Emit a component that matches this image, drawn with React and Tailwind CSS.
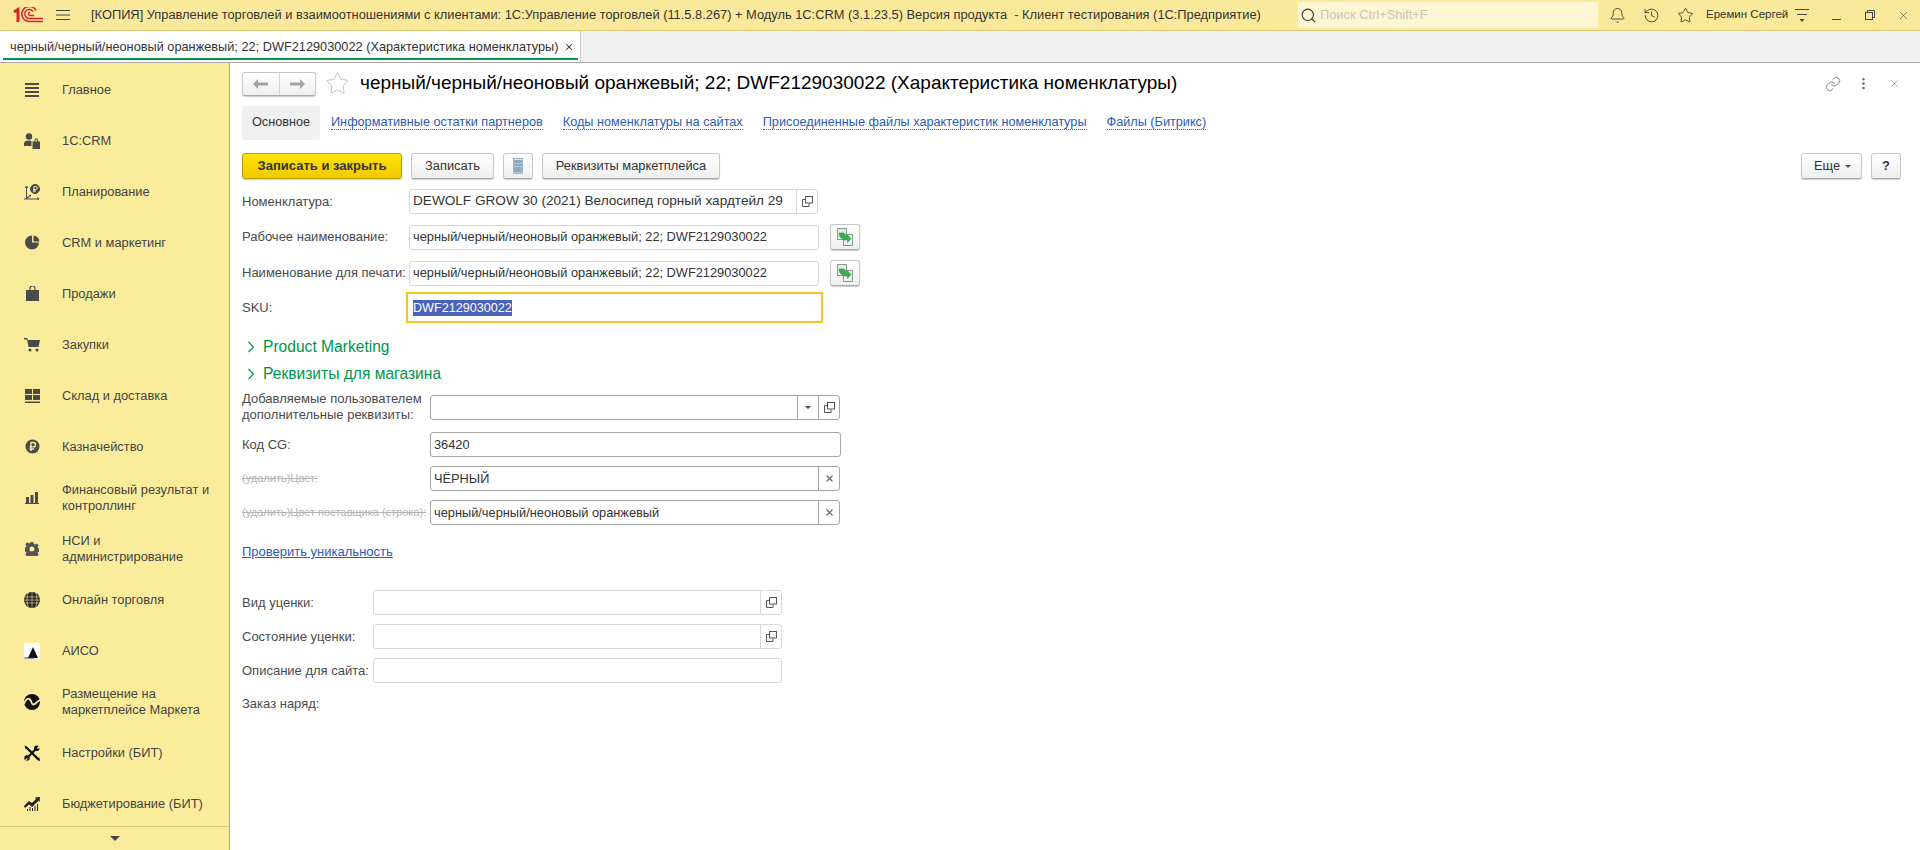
import React from "react";
import { Bell, History, Star, Search, Link, X, MoreVertical } from "lucide-react";

const CopyIcon = () => (
  <svg width="11" height="11" viewBox="0 0 11 11" fill="none" stroke="#555" strokeWidth="1">
    <path d="M3.500 3.500h-3v7h6.500v-3" />
    <rect x="3.500" y="0.500" width="7" height="6.500" />
  </svg>
);

const SmallX = () => (
  <svg width="7" height="7" viewBox="0 0 7 7" stroke="#666" strokeWidth="1.100"><path d="M0.500 0.500l6 6M6.500 0.500l-6 6" /></svg>
);

const GreenCopy = () => (
  <svg width="18" height="18" viewBox="0 0 18 18">
    <rect x="1.500" y="0.500" width="9" height="11" fill="#e4ece6" stroke="#8a9a90" />
    <rect x="7.500" y="6.500" width="9" height="11" fill="#f1f5f2" stroke="#8a9a90" />
    <path d="M3 5h5l1 3 2-1.500 4 4-3.500 4v-2.500H8L4 9z" fill="#35b050" stroke="#1f8a3a" strokeWidth=".5" />
  </svg>
);

const menuIcons = {
  main: (
    <svg width="16" height="16" viewBox="0 0 16 16" fill="#4a4a4a"><path d="M1 1h14v2H1zM1 5h14v2H1zM1 9h14v2H1zM1 13h14v2H1z" /></svg>
  ),
  crm: (
    <svg width="16" height="16" viewBox="0 0 16 16" fill="#4a4a4a">
      <circle cx="5" cy="3.500" r="3.200" />
      <path d="M0 13v-2.500C0 8.500 2 7.500 5 7.500c1.200 0 2 .2 2.500.5V13z" />
      <path d="M8.500 8.500H16V16H8.500zM10.500 8.500V7a1.700 1.700 0 0 1 3.500 0v1.500h-1V7a.7.7 0 0 0-1.500 0v1.500z" />
    </svg>
  ),
  plan: (
    <svg width="16" height="16" viewBox="0 0 16 16" fill="none" stroke="#4a4a4a" strokeWidth="1">
      <path d="M2.500 2v13M1 4l1.500-2L4 4M0 15h15M13 13.500l2 1.500-2 1.500" />
      <path d="M3 14l4-3" strokeWidth="1.200" />
      <circle cx="11" cy="5" r="4.500" fill="#4a4a4a" />
      <path d="M10 8.500V2.500h1.700a1.500 1.500 0 0 1 0 3H9M9 7h3" stroke="#fbec9d" strokeWidth="1" />
    </svg>
  ),
  pie: (
    <svg width="15" height="15" viewBox="0 0 15 15" fill="#4a4a4a">
      <path d="M7 0.500v7h7A7 7 0 1 1 7 0.500z" />
      <path d="M8.500 0.500a6.500 6.500 0 0 1 6 6h-6z" />
    </svg>
  ),
  bag: (
    <svg width="13" height="15" viewBox="0 0 13 15" fill="#4a4a4a">
      <path d="M0 4h13v11H0z" />
      <path d="M4 5V2.500a2.500 2.500 0 0 1 5 0V5" fill="none" stroke="#4a4a4a" strokeWidth="1.200" />
      <path d="M5 4V2.500a1.500 1.500 0 0 1 3 0V4z" fill="#fbec9d" />
    </svg>
  ),
  cart: (
    <svg width="16" height="14" viewBox="0 0 16 14" fill="#4a4a4a">
      <path d="M0 0h3l1 2h12l-1.500 7H4.500L3 1.500H0z" />
      <circle cx="6" cy="12" r="1.500" />
      <circle cx="13" cy="12" r="1.500" />
    </svg>
  ),
  store: (
    <svg width="15" height="14" viewBox="0 0 15 14" fill="#4a4a4a">
      <path d="M0 0h7v5H0zM8 0h7v5H8zM0 6h7v5H0zM8 6h7v5H8zM0 12.500h15V14H0z" />
    </svg>
  ),
  rub: (
    <svg width="15" height="15" viewBox="0 0 15 15">
      <circle cx="7.500" cy="7.500" r="7" fill="#4a4a4a" />
      <path d="M6 12V3.500h2.300a2.200 2.200 0 0 1 0 4.400H4.500M4.500 10H9" fill="none" stroke="#fbec9d" strokeWidth="1.400" />
    </svg>
  ),
  bars: (
    <svg width="14" height="12" viewBox="0 0 14 12" fill="#4a4a4a">
      <path d="M1 5h3v6H1zM5.500 3h3v8h-3zM10 0h3v11h-3zM0 11h14v1H0z" />
    </svg>
  ),
  gear: (
    <svg width="14" height="14" viewBox="0 0 14 14" fill="#555">
      <path fillRule="evenodd" d="M5.600 0h2.800l.4 2 1.200.5 1.700-1.100 2 2-1.100 1.700.5 1.200 2 .4v2.800l-2 .4-.5 1.200 1.100 1.700-2 2-1.700-1.100-1.200.5-.4 2H5.600l-.4-2-1.200-.5-1.700 1.100-2-2 1.100-1.700-.5-1.200-2-.4V5.600l2-.4.500-1.200L.3 2.300l2-2L4 1.400l1.200-.5zM7 4.500a2.500 2.500 0 1 0 0 5 2.500 2.500 0 0 0 0-5z" />
    </svg>
  ),
  globe: (
    <svg width="16" height="16" viewBox="0 0 16 16" fill="none">
      <circle cx="8" cy="8" r="8" fill="#222" />
      <path d="M0 5h16M0 8h16M0 11h16M8 0v16M4.500 1c-2 4-2 10 0 14M11.500 1c2 4 2 10 0 14" stroke="#fbec9d" strokeWidth=".6" />
    </svg>
  ),
  aiso: (
    <svg width="16" height="16" viewBox="0 0 16 16">
      <rect width="16" height="16" fill="#fff" />
      <path d="M9 4l5 11H4z" fill="#111" />
      <path d="M0 15.500h10v-1H1z" fill="#333" />
    </svg>
  ),
  market: (
    <svg width="16" height="16" viewBox="0 0 16 16">
      <circle cx="8" cy="8" r="8" fill="#111" />
      <path d="M0 10C2 5 4 3.500 6 5.500s1 5 3.500 5S13 7 16 6" fill="none" stroke="#fbec9d" strokeWidth="1.800" />
    </svg>
  ),
  tools: (
    <svg width="16" height="16" viewBox="0 0 16 16" fill="#111" stroke="#111">
      <path d="M2.500 2.500l11 11M13 3L3 13" strokeWidth="2.300" fill="none" />
      <circle cx="12.800" cy="3.200" r="2.700" stroke="none" />
      <circle cx="3" cy="13" r="2.700" stroke="none" />
      <path d="M12.500 3.500L15 0.500l1 3z" fill="#fbec9d" stroke="none" />
      <path d="M3.500 12.500L0.500 15.500H3z" fill="#fbec9d" stroke="none" />
      <path d="M0.500 0.500l2.500 1 .5 2-2 .5z" stroke="none" />
      <path d="M12 11.500l3.500 1.500.5 3-3-1z" stroke="none" />
    </svg>
  ),
  chart: (
    <svg width="16" height="14" viewBox="0 0 16 14" fill="#222">
      <path d="M0 9l5-5 3 2 4-4-1-1.500L16 0l-.5 5-1.200-1.200L8.200 10 5 7.500 1 11z" />
      <path d="M3 12h1v2H3zM5.500 10h1v4h-1zM8 11h1v3H8zM10.500 9h1v5h-1zM13 7h1v7h-1z" />
    </svg>
  ),
};

const menu = [
  { icon: "main", label: "Главное" },
  { icon: "crm", label: "1С:CRM" },
  { icon: "plan", label: "Планирование" },
  { icon: "pie", label: "CRM и маркетинг" },
  { icon: "bag", label: "Продажи" },
  { icon: "cart", label: "Закупки" },
  { icon: "store", label: "Склад и доставка" },
  { icon: "rub", label: "Казначейство" },
  { icon: "bars", label: "Финансовый результат и контроллинг" },
  { icon: "gear", label: "НСИ и администрирование" },
  { icon: "globe", label: "Онлайн торговля" },
  { icon: "aiso", label: "АИСО" },
  { icon: "market", label: "Размещение на маркетплейсе Маркета" },
  { icon: "tools", label: "Настройки (БИТ)" },
  { icon: "chart", label: "Бюджетирование (БИТ)" },
];

const formTabs = [
  "Информативные остатки партнеров",
  "Коды номенклатуры на сайтах",
  "Присоединенные файлы характеристик номенклатуры",
  "Файлы (Битрикс)",
];

const Button = ({ className = "", children }) => (
  <div className={`h-[26px] flex items-center justify-center rounded-[3px] border border-[#c8c8c8] border-b-[#a8a8a8] bg-gradient-to-b from-white to-[#efefef] text-[12.85px] text-[#333] shadow-[0_1px_1px_rgba(0,0,0,0.2)] ${className}`}>
    {children}
  </div>
);

const Input = ({ value, width, dark, segments = [], size = "text-[12.8px]" }) => (
  <div className={`h-[25px] flex items-center rounded-[3px] border bg-white text-[#333] ${size} ${dark ? "border-[#a6a6a6]" : "border-[#d8d8d8]"} ${width}`}>
    <div className="flex-1 px-[3px] whitespace-nowrap overflow-hidden">{value}</div>
    {segments.map((s, i) => (
      <div key={i} className={`w-[21px] h-full flex items-center justify-center border-l ${dark ? "border-[#a6a6a6]" : "border-[#d8d8d8]"}`}>
        {s === "copy" && <CopyIcon />}
        {s === "x" && <SmallX />}
        {s === "drop" && <div className="w-0 h-0 border-x-[3px] border-x-transparent border-t-[3px] border-t-[#444]" />}
      </div>
    ))}
  </div>
);

const Label = ({ className = "", children }) => (
  <div className={`text-[13px] text-[#4a4a4a] shrink-0 ${className}`}>{children}</div>
);

const DeletedLabel = ({ children }) => (
  <div className="w-[188px] shrink-0 text-[11px] text-[#b4b4b4] line-through whitespace-nowrap">{children}</div>
);

const Section = ({ className = "", children }) => (
  <div className={`flex items-center h-[20px] text-[#009646] text-[15.6px] ${className}`}>
    <svg width="8" height="12" viewBox="0 0 8 12" fill="none" stroke="#009646" strokeWidth="1.200" className="ml-[5px] mr-[8px]">
      <path d="M1.500 1l5 5-5 5" />
    </svg>
    {children}
  </div>
);

export default function App() {
  return (
    <div className="w-full h-screen overflow-hidden flex flex-col bg-white font-['Liberation_Sans',Arial,sans-serif]">
      {/* title bar */}
      <div className="h-[31px] shrink-0 flex items-center bg-[#fbe99b] border-b border-[#d9c973] text-[12.85px] text-[#333]">
        <svg width="30" height="17" viewBox="13 7 30 17" className="ml-[13px]" fill="none" stroke="#d8232a" strokeWidth="1.500">
          <path d="M14 12l4-2.500V22" strokeWidth="3" />
          <path d="M43 21.500H29a7.500 7.500 0 1 1 7-11" />
          <path d="M43 18.500H29.500a4.500 4.500 0 1 1 3.500-7" />
          <path d="M34 15.500h-4a1.500 1.500 0 0 1 0-3" />
        </svg>
        <svg width="14" height="12" viewBox="0 0 14 12" className="ml-[13px]" stroke="#444" strokeWidth="1">
          <path d="M0 1.500h14M0 6h14M0 10.500h14" />
        </svg>
        <div className="ml-[21px] w-[1207px] whitespace-pre">[КОПИЯ] Управление торговлей и взаимоотношениями с клиентами: 1С:Управление торговлей (11.5.8.267) + Модуль 1С:CRM (3.1.23.5) Версия продукта  - Клиент тестирования (1С:Предприятие)</div>
        <div className="w-[300px] h-[26px] flex items-center rounded-[2px] bg-[#fdf6d2]">
          <Search size={17} strokeWidth={1.5} color="#333" className="ml-[2px]" />
          <span className="ml-[3px] text-[#c9c5b2]">Поиск Ctrl+Shift+F</span>
        </div>
        <Bell size={17} strokeWidth={1.2} className="ml-[11px]" />
        <History size={17} strokeWidth={1.2} className="ml-[17px]" />
        <Star size={17} strokeWidth={1.2} className="ml-[17px]" />
        <div className="ml-[12px] text-[11.5px] w-[76px] whitespace-nowrap">Еремин Сергей</div>
        <svg width="14" height="14" viewBox="0 0 14 14" className="ml-[13px]" stroke="#444" fill="none">
          <path d="M0 1.500h14M2 6.500h10" />
          <path d="M4.500 11h5L7 14z" fill="#444" stroke="none" />
        </svg>
        <div className="ml-[23px] w-[9px] h-[1px] bg-[#444] mt-[8px]" />
        <svg width="10" height="10" viewBox="0 0 10 10" className="ml-[24px]" stroke="#444" fill="none">
          <path d="M2.500 2.500v-2h7v7h-2" />
          <rect x="0.500" y="2.500" width="7" height="7" />
        </svg>
        <X size={13} strokeWidth={1} className="ml-[22px]" />
      </div>

      {/* open windows */}
      <div className="h-[32px] shrink-0 flex bg-[#f0f0f0] border-b border-[#a6a6a6]">
        <div className="w-[581px] h-full bg-white border-r border-[#cfcfcf] relative flex items-center text-[12.75px] text-[#333] pl-[10px]">
          <span className="whitespace-nowrap">черный/черный/неоновый оранжевый; 22; DWF2129030022 (Характеристика номенклатуры)</span>
          <X size={10} strokeWidth={2.5} className="ml-[6px]" />
          <div className="absolute left-[3px] w-[575px] bottom-[2px] h-[2px] bg-[#009646]" />
        </div>
      </div>

      <div className="flex-1 min-h-0 flex">
        {/* sections panel */}
        <div className="w-[230px] shrink-0 flex flex-col bg-[#fbec9b] border-r border-[#b5a968]">
          <div className="flex-1 min-h-0 overflow-hidden pt-[1px]">
            {menu.map((m) => (
              <div key={m.label} className="h-[51px] flex items-center text-[12.85px] leading-[16px] text-[#444]">
                <div className="w-[62px] pl-[24px] pr-[22px] shrink-0 flex items-center justify-center">{menuIcons[m.icon]}</div>
                <div className="w-[160px]">{m.label}</div>
              </div>
            ))}
          </div>
          <div className="h-[24px] shrink-0 flex items-center justify-center border-t border-[#d3c67e]">
            <div className="w-0 h-0 border-x-[5px] border-x-transparent border-t-[5px] border-t-[#444]" />
          </div>
        </div>

        {/* form */}
        <div className="flex-1 min-w-0 pl-[12px] pr-[19px]">
          <div className="flex items-center mt-[8px] h-[25px]">
            <div className="w-[74px] h-[24px] flex rounded-[3px] border border-[#c8c8c8] border-b-[#a8a8a8] bg-gradient-to-b from-white to-[#efefef] shadow-[0_1px_1px_rgba(0,0,0,0.2)]">
              <div className="flex-1 flex items-center justify-center border-r border-[#d4d4d4]">
                <svg width="15" height="10" viewBox="0 0 15 10" fill="#a3a3a3"><path d="M0 5l5-5v3.500h10v3H5V10z" /></svg>
              </div>
              <div className="flex-1 flex items-center justify-center">
                <svg width="15" height="10" viewBox="0 0 15 10" fill="#a3a3a3"><path d="M15 5l-5-5v3.500H0v3h10V10z" /></svg>
              </div>
            </div>
            <Star size={25} strokeWidth={0.8} color="#b5b5b5" className="ml-[9px]" />
            <div className="ml-[10px] text-[19px] text-black whitespace-nowrap">черный/черный/неоновый оранжевый; 22; DWF2129030022 (Характеристика номенклатуры)</div>
            <div className="flex-1" />
            <Link size={16} strokeWidth={1.1} color="#555" />
            <MoreVertical size={15} strokeWidth={2} color="#666" className="ml-[15px]" />
            <X size={11} strokeWidth={1} color="#444" className="ml-[18px] mr-[1px]" />
          </div>

          <div className="flex items-center mt-[10px] h-[34px] text-[12.7px]">
            <div className="w-[78px] h-full flex items-center justify-center rounded-[3px] bg-[#f0f0f0] text-[#333] mr-[11px]">Основное</div>
            <div className="flex gap-[20px]">
              {formTabs.map((t) => (
                <span key={t} className="text-[#2b5bb5] border-b border-dotted border-[#2b5bb5] leading-[13px] whitespace-nowrap">{t}</span>
              ))}
            </div>
          </div>

          <div className="flex items-center mt-[13px]">
            <div className="w-[160px] h-[26px] flex items-center justify-center rounded-[3px] border border-[#b8a000] bg-gradient-to-b from-[#ffe400] to-[#f4c800] text-[13px] font-bold text-[#333] shadow-[0_1px_1px_rgba(0,0,0,0.2)]">Записать и закрыть</div>
            <Button className="w-[83px] ml-[9px]">Записать</Button>
            <Button className="w-[30px] ml-[9px]">
              <svg width="10" height="16" viewBox="0 0 10 16" fill="#8fb3cf" stroke="#6d8ea8" strokeWidth=".6">
                <rect x=".5" y=".5" width="9" height="15" fill="#dbe7f0" />
                <path d="M1.500 2.500h7v2h-7zM1.500 6h7v2h-7zM1.500 9.500h7v2h-7zM1.500 12.500h7v1.500h-7z" />
              </svg>
            </Button>
            <Button className="w-[178px] ml-[9px]">Реквизиты маркетплейса</Button>
            <div className="flex-1" />
            <Button className="w-[61px] pl-[2px]">
              Еще
              <div className="ml-[5px] w-0 h-0 border-x-[3px] border-x-transparent border-t-[3px] border-t-[#555]" />
            </Button>
            <Button className="w-[30px] ml-[9px] font-bold">?</Button>
          </div>

          <div className="flex items-center mt-[10px]">
            <Label className="w-[167px]">Номенклатура:</Label>
            <Input value="DEWOLF GROW 30 (2021) Велосипед горный хардтейл 29" width="w-[409px]" segments={["copy"]} size="text-[13.6px]" />
          </div>
          <div className="flex items-center mt-[10px]">
            <Label className="w-[167px]">Рабочее наименование:</Label>
            <Input value="черный/черный/неоновый оранжевый; 22; DWF2129030022" width="w-[410px]" />
            <Button className="w-[30px] ml-[11px]"><GreenCopy /></Button>
          </div>
          <div className="flex items-center mt-[10px]">
            <Label className="w-[167px]">Наименование для печати:</Label>
            <Input value="черный/черный/неоновый оранжевый; 22; DWF2129030022" width="w-[410px]" />
            <Button className="w-[30px] ml-[11px]"><GreenCopy /></Button>
          </div>
          <div className="flex items-center mt-[6px]">
            <Label className="w-[164px]">SKU:</Label>
            <div className="w-[417px] h-[31px] flex items-center border-2 border-[#f6c51e] pl-[5px] text-[12.6px]">
              <span className="bg-[#4a62b8] text-white leading-[16px]">DWF2129030022</span>
            </div>
          </div>

          <Section className="mt-[14px]">Product Marketing</Section>
          <Section className="mt-[7px]">Реквизиты для магазина</Section>

          <div className="flex items-center mt-[7px]">
            <Label className="w-[188px] leading-[16px]">Добавляемые пользователем дополнительные реквизиты:</Label>
            <Input value="" dark width="w-[410px]" segments={["drop", "copy"]} />
          </div>
          <div className="flex items-center mt-[9px]">
            <Label className="w-[188px]">Код CG:</Label>
            <Input value="36420" dark width="w-[411px]" />
          </div>
          <div className="flex items-center mt-[9px]">
            <DeletedLabel>(удалить)Цвет:</DeletedLabel>
            <Input value="ЧЁРНЫЙ" dark width="w-[410px]" segments={["x"]} />
          </div>
          <div className="flex items-center mt-[9px]">
            <DeletedLabel>(удалить)Цвет поставщика (строка):</DeletedLabel>
            <Input value="черный/черный/неоновый оранжевый" dark width="w-[410px]" segments={["x"]} />
          </div>

          <div className="mt-[19px] text-[13px] leading-[15px] text-[#2b5bb5] underline">Проверить уникальность</div>

          <div className="flex items-center mt-[31px]">
            <Label className="w-[131px]">Вид уценки:</Label>
            <Input value="" width="w-[409px]" segments={["copy"]} />
          </div>
          <div className="flex items-center mt-[9px]">
            <Label className="w-[131px]">Состояние уценки:</Label>
            <Input value="" width="w-[409px]" segments={["copy"]} />
          </div>
          <div className="flex items-center mt-[9px]">
            <Label className="w-[131px]">Описание для сайта:</Label>
            <Input value="" width="w-[409px]" />
          </div>
          <Label className="mt-[11px]">Заказ наряд:</Label>
        </div>
      </div>
    </div>
  );
}
